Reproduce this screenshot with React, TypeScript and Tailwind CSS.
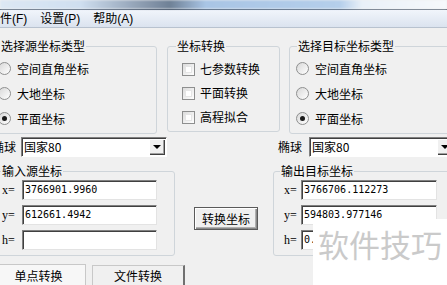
import React from 'react';

function Radio({ label, checked }: { label: string; checked?: boolean }) {
  return (
    <div className="flex h-[25px] items-center whitespace-nowrap">
      <div className="flex h-[13px] w-[13px] shrink-0 items-center justify-center rounded-full border border-[#8e8f8f] bg-[linear-gradient(135deg,#d8d8d8,#ffffff)]">
        {checked && <div className="h-[5px] w-[5px] rounded-full bg-[#1b1b1b]" />}
      </div>
      <span className="ml-[6px]">{label}</span>
    </div>
  );
}

function Check({ label }: { label: string }) {
  return (
    <div className="flex h-[24px] items-center whitespace-nowrap">
      <div className="h-[13px] w-[13px] shrink-0 border border-[#8e8f8f] bg-[linear-gradient(135deg,#dcdcdc,#ffffff)] p-[2px]">
        <div className="h-full w-full border border-[#e6e6e6] bg-white" />
      </div>
      <span className="ml-[5px]">{label}</span>
    </div>
  );
}

function Combo({ className = '' }: { className?: string }) {
  return (
    <div
      className={`flex h-[20px] w-[146px] shrink-0 items-center border border-[#808080] border-b-[#ffffff] border-r-[#ffffff] bg-white shadow-[inset_1px_1px_0_#404040] ${className}`}
    >
      <span className="flex-1 pl-[2px] font-['Noto_Sans_CJK_SC',sans-serif] text-[12px] leading-[16px]">国家80</span>
      <div className="mr-px flex h-[16px] w-[16px] items-center justify-center bg-[#f0f0f0] shadow-[inset_1px_1px_0_#ffffff,inset_-1px_-1px_0_#404040,inset_-2px_-2px_0_#a0a0a0]">
        <div className="h-0 w-0 border-x-[4px] border-t-[4px] border-x-transparent border-t-black" />
      </div>
    </div>
  );
}

function Field({ label, value, labelW, inputW }: { label: string; value: string; labelW: string; inputW: string }) {
  return (
    <div className="flex h-[20px] items-center">
      <span className={`${labelW} shrink-0 font-['Liberation_Serif',serif] text-[12px]`}>{label}</span>
      <div
        className={`${inputW} flex h-[20px] shrink-0 items-center overflow-hidden whitespace-nowrap border border-[#808080] border-b-[#e3e3e3] border-r-[#e3e3e3] bg-white pl-[2px] shadow-[inset_1px_1px_0_#404040] font-['DejaVu_Sans_Mono',monospace] text-[10px]`}
      >
        {value}
      </div>
    </div>
  );
}

export default function App() {
  return (
    <div className="relative h-[285px] w-[447px] overflow-hidden bg-[#f0f0f0] font-['Liberation_Sans','Noto_Sans_CJK_SC',sans-serif] text-[12px] leading-[16px] text-black">
      {/* title bar remnant */}
      <div className="h-[9px] bg-[linear-gradient(90deg,#dde8f4_0%,#cfdff0_18%,#8c9cb0_32%,#6f8196_38%,#a9c5e5_46%,#b5cfeb_76%,#e9f0f8_81%,#f7f9fc_100%)] blur-[1px]" />
      <div className="h-px bg-[#4c5868]" />
      <div className="flex h-[18px] items-center gap-[13px] whitespace-nowrap border-b border-[#b8c2cf] bg-[linear-gradient(180deg,#f1f5fb,#dbe3ef)]">
        <span className="-ml-[12px]">文件(F)</span>
        <span>设置(P)</span>
        <span>帮助(A)</span>
      </div>

      <div className="-ml-[8px] w-[480px] font-['Noto_Sans_CJK_SC',sans-serif]">
        {/* top groups */}
        <div className="mt-[10px] flex items-start">
          <fieldset className="w-[165px] shrink-0 rounded-[3px] border border-[#cfd5da]">
            <legend className="ml-[7px] px-px">选择源坐标类型</legend>
            <div className="pl-[5px] pt-[2px] pb-[2px]">
              <Radio label="空间直角坐标" />
              <Radio label="大地坐标" />
              <Radio label="平面坐标" checked />
            </div>
          </fieldset>
          <fieldset className="ml-[10px] w-[113px] shrink-0 rounded-[3px] border border-[#cfd5da]">
            <legend className="ml-[8px] px-px">坐标转换</legend>
            <div className="pl-[14px] pt-[3px] pb-[2px]">
              <Check label="七参数转换" />
              <Check label="平面转换" />
              <Check label="高程拟合" />
            </div>
          </fieldset>
          <fieldset className="ml-[9px] w-[180px] shrink-0 rounded-[3px] border border-[#cfd5da]">
            <legend className="ml-[7px] px-px">选择目标坐标类型</legend>
            <div className="pl-[6px] pt-[2px] pb-[2px]">
              <Radio label="空间直角坐标" />
              <Radio label="大地坐标" />
              <Radio label="平面坐标" checked />
            </div>
          </fieldset>
        </div>

        {/* ellipsoid row */}
        <div className="mt-[3px] flex items-center whitespace-nowrap">
          <span className="w-[24px] shrink-0">椭球</span>
          <Combo className="ml-[5px]" />
          <span className="ml-[111px] w-[24px] shrink-0">椭球</span>
          <Combo className="ml-[7px]" />
        </div>

        {/* coordinates row */}
        <div className="mt-[6px] flex items-start">
          <fieldset className="ml-px w-[182px] shrink-0 rounded-[3px] border border-[#cfd5da]">
            <legend className="ml-[7px] px-px">输入源坐标</legend>
            <div className="flex flex-col gap-[5px] pl-[8px] pt-px pb-[5px]">
              <Field label="x=" value="3766901.9960" labelW="w-[20px]" inputW="w-[135px]" />
              <Field label="y=" value="612661.4942" labelW="w-[20px]" inputW="w-[135px]" />
              <Field label="h=" value="" labelW="w-[20px]" inputW="w-[135px]" />
            </div>
          </fieldset>
          <button className="ml-[19px] mt-[44px] h-[23px] w-[64px] shrink-0 whitespace-nowrap border border-[#5a5a5a] bg-[#f0f0f0] text-[12px] leading-[16px] shadow-[inset_1px_1px_0_#ffffff,inset_-1px_-1px_0_#8a8a8a,inset_-2px_-2px_0_#b0b0b0]">
            转换坐标
          </button>
          <fieldset className="ml-[15px] w-[190px] shrink-0 rounded-[3px] border border-[#cfd5da]">
            <legend className="ml-[6px] px-px">输出目标坐标</legend>
            <div className="flex flex-col gap-[5px] pl-[10px] pt-px pb-[5px]">
              <Field label="x=" value="3766706.112273" labelW="w-[17px]" inputW="w-[136px]" />
              <Field label="y=" value="594803.977146" labelW="w-[17px]" inputW="w-[136px]" />
              <Field label="h=" value="0.000000" labelW="w-[17px]" inputW="w-[136px]" />
            </div>
          </fieldset>
        </div>

        {/* tabs */}
        <div className="mt-[8px] flex whitespace-nowrap">
          <div className="h-[22px] w-[94px] shrink-0 border-t border-r border-[#c8c8c8] bg-[#f7f7f7] pt-[3px] text-center">
            单点转换
          </div>
          <div className="ml-[6px] mt-px h-[22px] w-[93px] shrink-0 border-t border-l border-[#c8c8c8] border-r-2 border-r-[#707070] pt-[2px] text-center">
            文件转换
          </div>
        </div>
      </div>

      {/* watermark */}
      <div className="absolute bottom-0 left-[313px] right-0 top-[219px] whitespace-nowrap bg-white pl-[5px] pt-[9px] font-['Noto_Sans_CJK_SC',sans-serif] text-[31px] leading-[31px] text-[#cacaca]">
        软件技巧
      </div>
    </div>
  );
}
